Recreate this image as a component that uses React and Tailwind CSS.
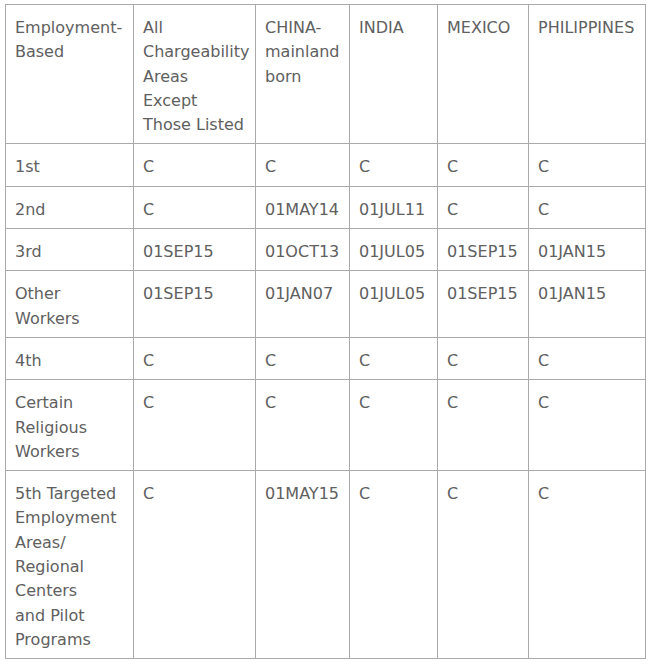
const header = [
  ["Employment-", "Based"],
  ["All", "Chargeability", "Areas", "Except", "Those Listed"],
  ["CHINA-", "mainland", "born"],
  ["INDIA"],
  ["MEXICO"],
  ["PHILIPPINES"],
];

const rows = [
  [["1st"], "C", "C", "C", "C", "C"],
  [["2nd"], "C", "01MAY14", "01JUL11", "C", "C"],
  [["3rd"], "01SEP15", "01OCT13", "01JUL05", "01SEP15", "01JAN15"],
  [["Other", "Workers"], "01SEP15", "01JAN07", "01JUL05", "01SEP15", "01JAN15"],
  [["4th"], "C", "C", "C", "C", "C"],
  [["Certain", "Religious", "Workers"], "C", "C", "C", "C", "C"],
  [
    ["5th Targeted", "Employment", "Areas/", "Regional", "Centers", "and Pilot", "Programs"],
    "C", "01MAY15", "C", "C", "C",
  ],
];

const widths = ["w-[128px]", "w-[122px]", "w-[94px]", "w-[88px]", "w-[91px]", "w-[117px]"];

const cell = "border border-[#aaaaaa] align-top pl-[9px] pr-[4px] pt-[11px] pb-[6px] text-left font-normal whitespace-nowrap";

function Lines({ lines }) {
  return lines.map((l, i) => (
    <div key={i}>{l}</div>
  ));
}

export default function App() {
  return (
    <div className="w-[650px] h-[664px] bg-white pl-[5px] pt-[4px]" style={{ fontFamily: '"DejaVu Sans", Verdana, sans-serif' }}>
      <table className="table-fixed border-collapse w-[641px] text-[16px] leading-[24.3px] text-[#606060]">
        <colgroup>
          {widths.map((w, i) => (
            <col key={i} className={w} />
          ))}
        </colgroup>
        <thead>
          <tr>
            {header.map((h, i) => (
              <th key={i} className={cell}>
                <Lines lines={h} />
              </th>
            ))}
          </tr>
        </thead>
        <tbody>
          {rows.map((r, i) => (
            <tr key={i}>
              <td className={cell}>
                <Lines lines={r[0]} />
              </td>
              {r.slice(1).map((v, j) => (
                <td key={j} className={cell}>{v}</td>
              ))}
            </tr>
          ))}
        </tbody>
      </table>
    </div>
  );
}
